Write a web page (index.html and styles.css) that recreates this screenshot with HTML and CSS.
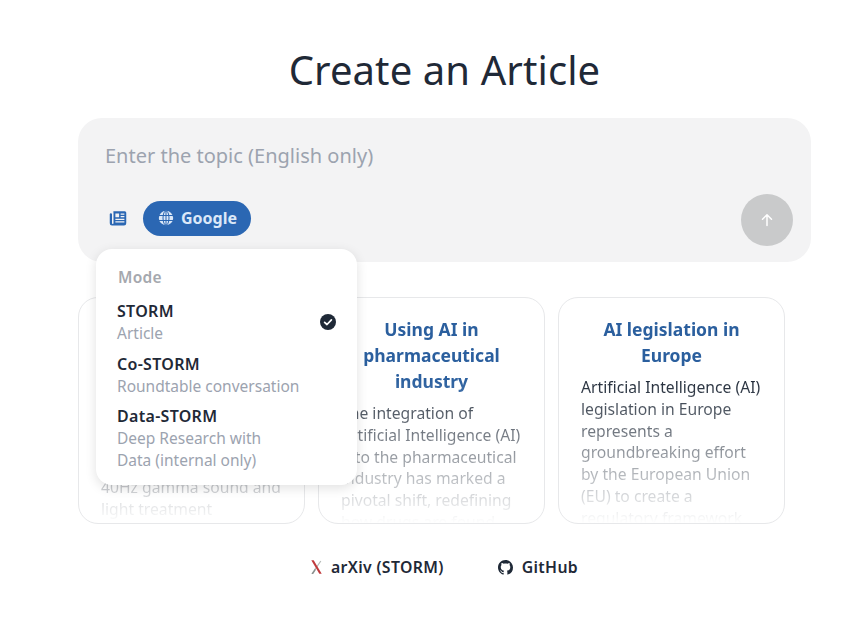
FILE: index.html
```html
<!DOCTYPE html>
<html lang="en">
<head>
<meta charset="utf-8">
<title>Create an Article</title>
<link rel="stylesheet" href="styles.css">
</head>
<body>
<main class="page">
  <h1 class="title">Create an Article</h1>
  <section class="composer">
    <div class="placeholder">Enter the topic (English only)</div>
    <div class="toolbar">
      <div class="tools">
        <span class="mode-icon">
          <svg width="18" height="18" viewBox="0 0 24 24" fill="#2b67b3"><path fill-rule="evenodd" d="M6 3h15a2 2 0 0 1 2 2v14a3 3 0 0 1-3 3H4a3 3 0 0 1-3-3V7a1.500 1.500 0 0 1 3 0v12a1 1 0 0 0 2 0V5a2 2 0 0 1 0-2Zm2.500 3v5h5V6Zm7 0v1.800h5V6Zm0 3.300V11h5V9.300ZM8.500 13v1.800h12V13Zm0 3.300V18h12v-1.700Z"/></svg>
        </span>
        <button class="engine">
          <svg width="16" height="16" viewBox="0 0 16 16" fill="none"><circle cx="8" cy="8" r="7.200" fill="#dbe8f8"/><g stroke="#2b67b3" stroke-width="1"><ellipse cx="8" cy="8" rx="3" ry="7.200"/><path d="M1 5.500h14M1 10.500h14M8 1v14"/></g></svg>
          <span>Google</span>
        </button>
      </div>
      <button class="send" aria-label="Send">
        <svg width="14" height="14" viewBox="0 0 14 14" fill="none" stroke="#fff" stroke-width="1.500" stroke-linecap="round" stroke-linejoin="round"><path d="M7 12.500V1.800M2.500 6.200 7 1.700l4.500 4.500"/></svg>
      </button>
    </div>
    <div class="menu">
      <div class="menu-label">Mode</div>
      <div class="option">
        <div class="option-text"><div class="option-name">STORM</div><div class="option-desc">Article</div></div>
        <svg class="check" width="16" height="16" viewBox="0 0 16 16"><circle cx="8" cy="8" r="8" fill="#1f2937"/><path d="M4.600 8.300 7 10.500l4.400-4.700" fill="none" stroke="#fff" stroke-width="1.700" stroke-linecap="round" stroke-linejoin="round"/></svg>
      </div>
      <div class="option">
        <div class="option-text"><div class="option-name">Co-STORM</div><div class="option-desc">Roundtable conversation</div></div>
      </div>
      <div class="option">
        <div class="option-text"><div class="option-name">Data-STORM</div><div class="option-desc">Deep Research with<br>Data (internal only)</div></div>
      </div>
    </div>
  </section>
  <section class="cards">
    <article class="card"><div class="card-inner">
      <h2 class="card-title">Gamma sound and light therapy</h2>
      <p class="card-text card-text-low">Recent research explored a<br>non-invasive approach using<br>40Hz gamma sound and<br>light treatment</p>
    </div></article>
    <article class="card"><div class="card-inner">
      <h2 class="card-title">Using AI in pharmaceutical industry</h2>
      <p class="card-text">The integration of Artificial Intelligence (AI) into the pharmaceutical industry has marked a pivotal shift, redefining how drugs are found</p>
    </div></article>
    <article class="card"><div class="card-inner">
      <h2 class="card-title">AI legislation in Europe</h2>
      <p class="card-text">Artificial Intelligence (AI) legislation in Europe represents a groundbreaking effort by the European Union (EU) to create a regulatory framework</p>
    </div></article>
  </section>
  <footer class="links">
    <a class="link">
      <svg width="11" height="16" viewBox="0 0 11 16"><path d="M1 14.800 9.800 2" fill="none" stroke="#b5bbb8" stroke-width="1.200"/><path d="M.3 1.200h2.400L10.700 14.800H8.300Z" fill="#c0393b"/><path d="M.5 15l3.500-5.500.8 1.400L2.200 15Z" fill="#8a8f8d"/></svg>
      <span>arXiv (STORM)</span>
    </a>
    <a class="link">
      <svg width="15" height="15" viewBox="0 0 16 16" fill="#1f2937"><path d="M8 0C3.580 0 0 3.580 0 8c0 3.540 2.290 6.530 5.470 7.590.4.070.55-.17.55-.38 0-.19-.01-.82-.01-1.490-2.010.37-2.530-.49-2.690-.94-.09-.23-.48-.94-.82-1.130-.28-.15-.68-.52-.01-.53.630-.01 1.080.58 1.230.82.720 1.210 1.870.87 2.330.66.070-.52.280-.87.510-1.070-1.780-.2-3.640-.89-3.640-3.950 0-.87.310-1.590.82-2.150-.08-.2-.36-1.020.08-2.120 0 0 .67-.21 2.200.82.640-.18 1.320-.27 2-.27s1.360.09 2 .27c1.530-1.040 2.200-.82 2.200-.82.440 1.100.160 1.920.08 2.120.51.560.82 1.270.82 2.150 0 3.070-1.870 3.750-3.650 3.950.29.250.54.730.54 1.480 0 1.070-.01 1.930-.01 2.200 0 .21.150.46.550.38A8.010 8.010 0 0 0 16 8c0-4.420-3.580-8-8-8Z"/></svg>
      <span>GitHub</span>
    </a>
  </footer>
</main>
</body>
</html>
```
FILE: styles.css
```css
* { box-sizing: border-box; }
html, body { margin: 0; height: 100%; background: #fff; }
body {
  font-family: "Noto Sans", "Open Sans", sans-serif;
  color: #1f2937;
  overflow: hidden;
}
.page {
  width: 733px;
  margin-left: 78px;
  padding-top: 40px;
}
.title {
  margin: 0;
  font-size: 40px;
  line-height: 60px;
  font-weight: 400;
  text-align: center;
  color: #1f2937;
  letter-spacing: 0.1px;
}
.composer {
  position: relative;
  height: 144px;
  margin-top: 18px;
  padding: 23px 18px 16px 27px;
  background: #f3f3f4;
  border-radius: 24px;
  display: flex;
  flex-direction: column;
  justify-content: space-between;
}
.placeholder {
  font-size: 20px;
  line-height: 30px;
  color: #9ca3af;
}
.toolbar {
  display: flex;
  align-items: center;
  justify-content: space-between;
}
.tools {
  display: flex;
  align-items: center;
  gap: 16px;
  margin-bottom: 4px;
}
.mode-icon { display: flex; margin-left: 4px; }
.engine {
  display: flex;
  align-items: center;
  gap: 7px;
  height: 35px;
  width: 108px;
  padding: 0 0 0 15px;
  border: 0;
  border-radius: 18px;
  background: #2b67b3;
  color: #dbe8f8;
  font: 700 16px/20px "Noto Sans", sans-serif;
}
.send {
  display: flex;
  align-items: center;
  justify-content: center;
  width: 52px;
  height: 52px;
  padding: 0;
  border: 0;
  border-radius: 50%;
  background: #c9cacb;
}
.menu {
  position: absolute;
  left: 18px;
  top: 131px;
  z-index: 2;
  width: 261px;
  height: 236px;
  padding: 18px 21px;
  background: #fff;
  border-radius: 16px;
  box-shadow: 0 3px 12px rgba(0, 0, 0, 0.12);
}
.menu-label {
  font-size: 15.500px;
  line-height: 21px;
  font-weight: 600;
  letter-spacing: 0.3px;
  color: #a5a8ae;
  margin-left: 1px;
  margin-bottom: 12px;
}
.option {
  display: flex;
  justify-content: space-between;
  align-items: center;
  margin-bottom: 8.500px;
}
.option-name {
  font-size: 16px;
  line-height: 22px;
  font-weight: 600;
  letter-spacing: 0.3px;
  color: #1f2937;
}
.option-desc {
  font-size: 15.500px;
  line-height: 22px;
  color: #9ca3af;
}
.cards {
  display: grid;
  grid-template-columns: repeat(3, 227px);
  gap: 13px;
  margin-top: 35px;
}
.card {
  height: 227px;
  border: 1px solid #e7e8ea;
  border-radius: 20px;
  overflow: hidden;
}
.card-inner {
  height: 100%;
  padding: 18px 22px 0;
  -webkit-mask-image: linear-gradient(to bottom, #000 36%, transparent 100%);
  mask-image: linear-gradient(to bottom, #000 36%, transparent 100%);
}
.card-title {
  margin: 0;
  font-size: 17.500px;
  line-height: 26px;
  font-weight: 700;
  text-align: center;
  color: #2b5f9e;
}
.card-text {
  margin: 9px 0 0;
  font-size: 15.700px;
  line-height: 21.800px;
  color: #1f2937;
}
.card-text-low { margin-top: 22px; }
.links {
  display: flex;
  justify-content: center;
  gap: 54px;
  margin-top: 32px;
}
.link {
  display: flex;
  align-items: center;
  gap: 9px;
  font-size: 15.800px;
  line-height: 22px;
  font-weight: 600;
  letter-spacing: 0.35px;
  color: #1f2937;
}
```
